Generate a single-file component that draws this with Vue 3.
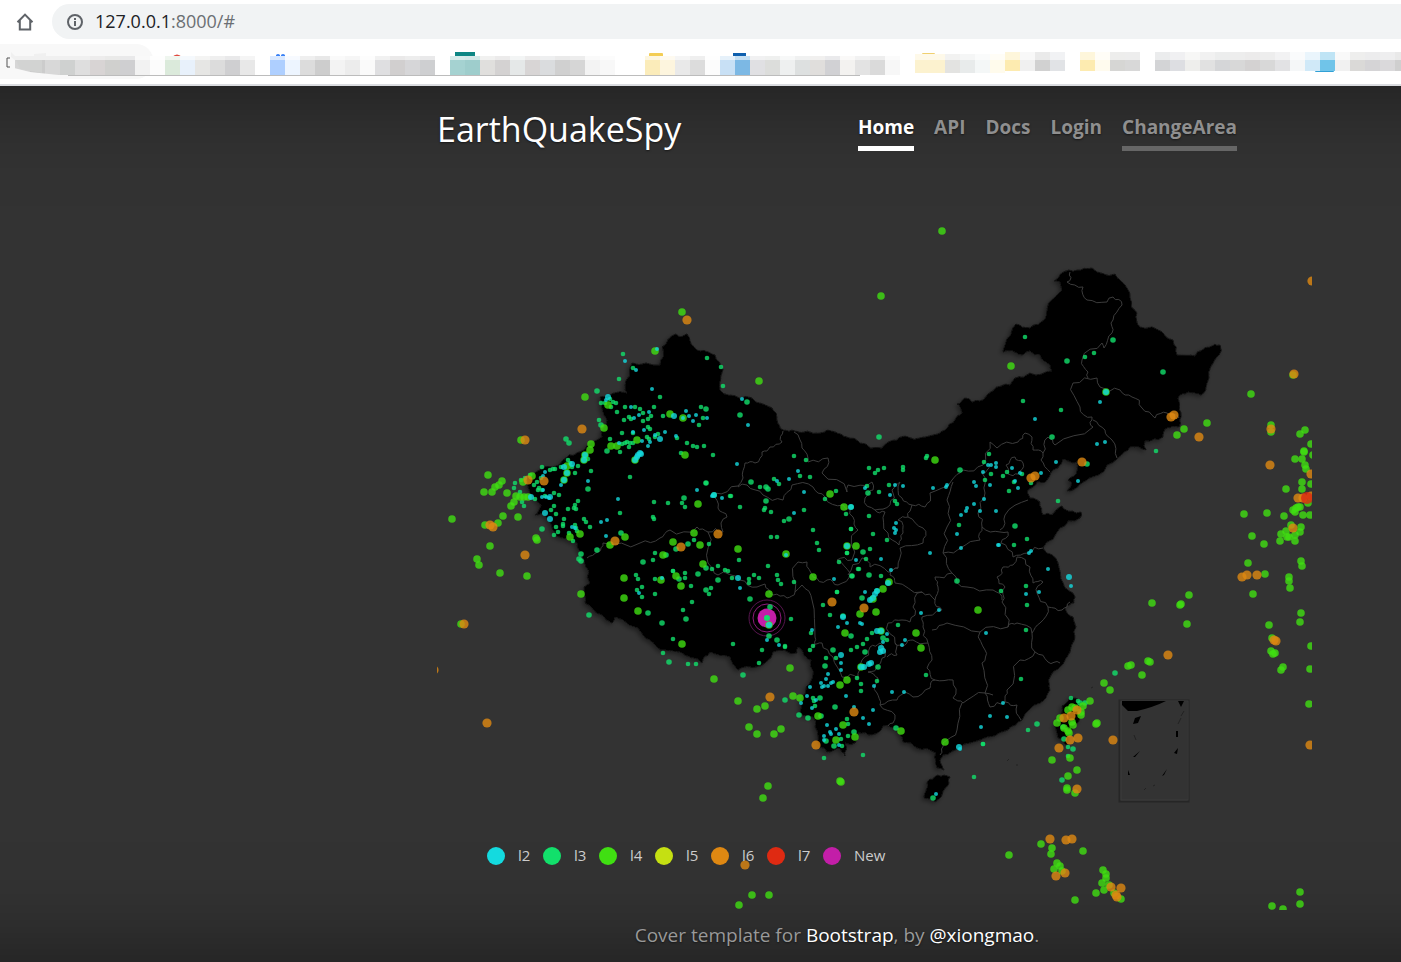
<script setup>
const navLinks = [
  { label: 'Home', state: 'active' },
  { label: 'API', state: '' },
  { label: 'Docs', state: '' },
  { label: 'Login', state: '' },
  { label: 'ChangeArea', state: 'hovered' },
]

const legend = [
  { label: 'l2', color: '#14dadf' },
  { label: 'l3', color: '#12e06b' },
  { label: 'l4', color: '#40df12' },
  { label: 'l5', color: '#c5e012' },
  { label: 'l6', color: '#df8812' },
  { label: 'l7', color: '#df2a12' },
  { label: 'New', color: '#c31ea8' },
]

/* bookmark mosaic: runs of 15px tiles, [start x, vertical shift, colours] */
const tileRuns = [
  [15, 0, 'd6d6d6 cccccc d8d8d8 cfd1d0 dedede d8d4d4 d0d0ce cfcfd1 f2f2f2 fcfcfc dbeadb e8f1fb e6e6e4 dcdcdc cfcfd1 e8e8e8'],
  [270, 0, 'aecfff edf5ff dcdcdc cdcdcd f3f3f3 ececec fafafa dfdfe1 d1cfcf d6d6d8 cecfd1'],
  [450, 0, 'a5d2d1 9ecdcc e0dfdd d4d2d2 e5e8e8 d8d5d5 dadcde d0d0d0 d6d6d6 f3f3f3 f8f8f8'],
  [645, 0, 'fbecba fdf5de e9e9e9 dcdcdc fcfcfc c8e0f5 7cb8e4 e0e0e3 dcdddb eef0f0 dde0e0 e0dedc d1d1d4 f3f2f0 e3e3e3 dadada f7f7f7'],
  [915, 2, 'fcf2cf fcf2cf e3e3e1 e8ebeb f4f7f7 fffbec'],
  [1005, 4, 'fdebb0 f0f0f0 d1d1d1 e1e3e6'],
  [1080, 4, 'fdebb0 fffbee d6d6d4 d8d8d8'],
  [1155, 4, 'd3d4d6 dddee2 eeeeec e1e1e1 d5d6d8 d8d8d8 d4d2d2 d8d8d8 e2e2e4 f5f7f8 d0e9f8 70c4e9 f1f1f1 dad9d7 d5d4d6 dad9db cfcfcf'],
]
const tiles = tileRuns.flatMap(([x, lift, list]) =>
  list.split(' ').map((c, i) => ({ x: x + i * 15, lift, fill: '#' + c })),
)

const points = (text) => text.trim().split(/\s+/).map((p) => p.split(',').map(Number))

/* adds small deterministic kinks so borders look like surveyed coastlines */
function roughen(list, closed, amount) {
  let line = closed ? [...list, list[0]] : list
  for (let pass = 0; pass < 2; pass++) {
    const out = [line[0]]
    for (let i = 1; i < line.length; i++) {
      const [ax, ay] = line[i - 1]
      const [bx, by] = line[i]
      const len = Math.hypot(bx - ax, by - ay)
      if (len > 5) {
        const r = Math.sin(ax * 12.9 + by * 78.2 + pass * 3.1) * 43758.5
        const k = ((r - Math.floor(r)) - 0.5) * amount * Math.min(len, 16)
        out.push([(ax + bx) / 2 - ((by - ay) / len) * k, (ay + by) / 2 + ((bx - ax) / len) * k])
      }
      out.push([bx, by])
    }
    line = out
  }
  return 'M' + line.map((p) => p[0].toFixed(1) + ' ' + p[1].toFixed(1)).join('L') + (closed ? 'Z' : '')
}

const land = [
  `662,347 676,334 681,337 687,334 690,341 700,351 708,352 715,355 723,370 720,390 728,395 752,398 772,408 777,420 783,430 795,431 820,433 835,432 847,437 860,443 882,448 897,440 908,437 933,435 945,430 955,420 962,413 957,404 965,398 980,401 993,391 1010,385 1015,378 1030,373 1052,371 1050,365 1040,355 1030,351 1023,355 1015,352 1003,352 1005,345 1016,324 1030,328 1045,319 1047,310 1062,290 1060,282 1054,281 1062,273 1077,270 1092,268 1115,274 1125,285 1130,298 1137,313 1140,327 1162,332 1173,340 1177,355 1195,356 1210,347 1220,345 1219,355 1213,363 1207,383 1201,395 1188,392 1178,398 1181,413 1179,427 1167,428 1163,437 1145,441 1146,450 1130,447 1118,458 1098,475 1083,482 1067,491 1072,483 1068,480 1077,470 1077,462 1063,459 1058,468 1047,480 1037,482 1027,492 1030,498 1040,502 1043,515 1052,515 1062,506 1072,511 1081,512 1080,518 1060,528 1043,548 1058,563 1063,583 1075,597 1074,603 1065,608 1073,617 1075,637 1070,652 1060,667 1050,677 1050,690 1040,703 1022,720 1008,730 980,740 960,747 943,755 940,760 944,770 937,768 936,753 917,748 903,742 893,728 883,726 872,735 858,733 855,743 845,743 845,756 839,748 827,752 820,747 818,737 813,717 800,713 800,702 810,683 811,660 803,652 798,647 797,653 773,652 757,667 738,670 730,657 710,652 702,663 680,652 655,645 643,635 615,617 612,623 592,608 585,603 584,587 590,583 584,560 577,543 555,535 550,522 542,513 535,515 541,505 530,493 527,478 540,470 563,460 577,453 602,437 607,420 600,397 627,393 625,387 632,363 660,365`,
  '927,782 938,775 950,777 945,788 935,802 924,798',
  '1070,697 1084,702 1080,716 1070,734 1066,745 1058,738 1055,723 1062,706',
].map((t) => roughen(points(t), true, 0.36))

const borders = [
  '783,431 782,442 770,447 762,452 755,463 745,463 743,478 738,486 715,493 718,508 727,517 721,523 723,532 708,532 697,527 670,530 660,538 640,543 603,543 598,552 587,558',
  '708,532 708,563 718,575 740,580 757,587 765,584 773,595 787,598 795,592 798,562 807,562 813,577 827,580 838,585 850,573 837,560 852,560 858,530 853,517 843,505 825,497 813,487 792,485 783,500 763,495 747,485 738,487',
  '795,592 802,585 812,600 815,637 813,647 822,643 833,657 842,677 858,678 862,660 870,647 880,643 885,657 878,665 868,672 878,678 877,693 880,705 895,715 893,723 888,726',
  '880,705 897,700 905,692 913,697 930,688 935,680 927,668 932,660 928,643 913,640 905,645 895,643 897,655 887,657',
  '895,643 888,623 902,620 910,622 913,607 922,592 895,583 890,575 898,568',
  '922,592 935,600 942,610 922,617 923,627 928,643',
  '932,630 947,623 980,632 985,650 982,663 985,693 993,695',
  '935,680 953,680 953,698 963,703 985,693',
  '962,703 957,730 943,743 940,755',
  '794,432 802,448 808,462 828,458 822,473 847,492 848,485 872,482 873,490 865,498 875,510 890,505 892,490 900,482 902,498 912,505 925,507 930,493 952,480 963,470 983,465 990,442 997,448 1018,442 1025,433 1032,437 1033,450 1043,453 1048,437 1055,445 1093,427 1092,417 1080,407 1073,383 1097,378 1100,387 1120,390 1132,397 1142,408 1155,418 1167,413 1179,418',
  '1070,272 1067,282 1083,287 1087,300 1107,302 1113,297 1122,305 1113,320 1112,333 1104,348 1102,343 1082,360 1088,372 1088,378',
  '1093,420 1105,430 1112,440 1117,458',
  '1043,453 1041,460 1050,472',
  '875,510 885,512 888,533 899,545 903,533 898,520 908,517 923,528 923,543 900,548 898,568 888,572 870,567 862,558 848,575',
  '908,517 912,505',
  '953,482 947,500 947,527 943,553 952,573 935,577 938,587 935,600',
  '943,553 962,547 980,540 982,527 978,513 985,493 982,473 990,465',
  '982,527 1000,532 1008,532 1001,543 1013,557 1028,553 1043,548',
  '1000,530 1005,515 1028,500',
  '1017,557 1013,565 1003,567 997,577 1005,587 1002,602 1008,627',
  '952,573 967,587 993,590 1002,600',
  '980,632 1008,627 1017,623 1032,633 1035,652 1020,660 1007,690 1005,702 990,707 985,693',
  '1017,557 1030,567 1033,583 1043,582 1037,593 1048,607 1040,623 1032,633',
  '1048,607 1062,610 1070,602',
  '1035,652 1048,662 1060,663',
  '1005,702 1017,705 1021,720',
  '1006,465 1015,457 1023,463 1018,474 1008,474 1006,465',
].map((t) => roughen(points(t), false, 0.5))

const quakes = [
  { color: '#12e06b', r: 2.3, at: `623,354 633,368 619,379 660,397 654,407 651,416 648,419 663,416 625,407 635,407 640,409 617,412 601,403 605,403 610,399 613,402 616,403 611,407 629,417 631,419 624,420 643,421 643,413 622,433 633,433 648,427 650,429 655,437 658,434 647,437 649,439 599,420 610,439 620,452 629,447 625,443 627,442 630,443 633,443 622,444 588,459 591,471 578,466 575,473 630,477 568,460 570,463 572,467 561,467 542,467 550,470 553,469 555,469 541,478 537,482 534,485 539,488 542,490 554,493 559,495 545,496 515,483 514,488 520,492 521,480 525,478 530,475 522,502 524,506 535,499 538,490 551,510 556,514 554,506 568,509 578,501 575,505 574,508 576,509 564,519 563,524 563,526 556,527 558,532 554,535 584,519 586,522 575,525 576,528 577,531 590,527 569,533 573,541 620,513 654,502 668,503 653,517 654,519 655,553 653,560 636,575 638,579 642,587 637,590 642,597 655,594 673,639 663,653 655,579 673,571
707,358 721,367 723,386 701,407 703,418 699,425 687,443 693,446 697,447 704,446 713,455 681,453 677,438 794,456 806,460 800,476 810,477 779,484 774,479 730,496 836,491 706,483 682,503 685,507 740,507 731,496 765,508 764,510 771,512 804,510 784,521 813,530 825,499 846,514 851,529 817,543 819,550 771,537 777,537 709,544 694,540 739,560 768,566 718,566 712,569 725,570 728,571 732,578 685,573 685,578 673,571 691,586 711,588 709,594 692,602 683,610 749,579 749,583 754,575 759,578 777,575 778,580 781,584 794,582 791,619 785,647 733,644 759,663 696,664 688,664 837,592 823,605 830,615 839,562 847,553 852,576 858,569 811,633 813,646 810,650
869,468 878,470 875,473 884,468 903,467 903,470 927,456 926,458 867,486 879,492 889,485 895,501 897,504 869,516 851,529 873,534 887,540 870,549 866,559 859,569 881,576 847,553 837,592 989,454 984,462 991,474 985,480 959,525 857,647 851,650 863,644 867,639 872,633 887,640 898,625 836,658 826,658 785,646 861,684 861,691 877,681 857,678 926,675 813,698 814,701 815,706 847,719 848,724 848,736 841,739 842,746 824,758 863,755 974,777 983,744
1025,337 1085,357 1094,353 1023,401 1061,410 1156,451 1007,472 1003,476 1022,474 1009,491 1014,482 1031,483 1058,501 1027,539 1014,545 1001,591 1026,586 1027,605 1026,630 1021,679 1028,730 983,744 1071,698 1078,701 1068,747 1068,756 762,650 760,487` },
  { color: '#12e06b', r: 2.8, at: `597,391 601,425 607,451 566,439 569,443 542,529 597,550 579,559 581,561 581,554 589,615 621,533 643,562 666,555 648,613 662,623 669,662 588,489 706,409 747,402 740,415 751,482 766,487 768,489 684,498 706,483 766,501 789,519 688,544 676,549 706,568 718,580 698,574 679,579 706,590 686,619 750,599 770,607 769,636 777,640 743,675 714,495 851,507 879,437 960,470 868,493 863,552 852,576 869,575 862,598 877,591 957,581 851,636 883,638 833,650 825,666 785,700 799,715 808,718 820,698 835,707 854,732 834,746 896,728 933,798 865,652 878,667 826,741 821,716 843,616 1113,340 1067,361 1163,372 1052,437 1087,464 1015,526 1037,724 1115,673 1080,703 1085,703 1073,749 1062,780 1064,739 1063,727` },
  { color: '#40df12', r: 3.8, at: `655,351 585,397 608,405 604,428 591,444 590,450 611,446 617,446 637,440 635,460 670,414 584,460 585,455 567,473 564,480 567,466 488,475 502,481 499,485 495,487 492,492 484,492 507,493 516,496 520,497 524,497 528,497 523,482 532,476 521,440 452,519 518,517 503,516 511,506 514,502 498,523 485,525 490,546 477,559 479,565 500,573 527,576 536,538 537,540 461,624 570,537 580,534 610,545 625,537 624,578 624,598 638,611 581,594 663,555 661,580 676,576 673,542 759,381 682,312 683,418 685,455 830,494 698,504 694,533 700,545 738,549 786,554 844,507 703,564 813,577 769,594 769,625 682,644 681,586 790,668 714,679 847,546 856,546 935,460 889,582 883,589 873,599 876,612 860,614 978,610 845,633 916,633 921,648 881,631 861,667 847,680 840,685 793,696 800,698 781,729 818,716 843,725 836,740 855,737 901,731 945,742 840,781 841,782 738,701 757,709 765,706 749,727 757,734 774,734 768,786 763,798 752,895 769,895 739,905
1009,855 1041,844 1052,848 1051,854 1083,851 1057,863 1060,866 1054,869 1062,871 1103,870 1106,874 1106,878 1102,883 1096,893 1104,890 1109,885 1075,900 1121,899 1114,893 1300,892 1300,904 1272,906 1283,909 1011,366 1106,392 1177,435 1184,429 1207,423 1090,701 1083,706 1081,712 1081,715 1072,707 1075,708 1068,710 1060,718 1057,723 1064,728 1068,731 1073,725 1072,722 1069,733 1096,724 1097,723 1052,760 1070,758 1077,770 1068,776 1067,788 1067,790 1075,793 1104,683 1110,690 1128,666 1131,665 1142,675 1148,661 1150,662 1152,603 1180,605 1181,604 1187,624 1189,595
1293,375 1251,394 1271,425 1271,432 1305,430 1300,434 1311,444 1304,451 1304,452 1295,459 1302,459 1305,465 1306,469 1302,482 1302,489 1286,489 1311,484 1313,455 1244,514 1267,513 1284,516 1296,508 1295,512 1298,507 1293,510 1300,507 1303,515 1310,515 1308,503 1291,525 1301,527 1300,532 1295,535 1295,541 1289,537 1287,537 1281,534 1280,541 1286,531 1252,536 1264,544 1248,563 1265,574 1253,594 1301,561 1302,566 1289,577 1289,581 1290,588 1301,613 1300,622 1269,625 1272,638 1271,651 1273,654 1275,653 1283,667 1281,670 1311,646 1310,669 1309,704 942,231 881,296` },
  { color: '#14dadf', r: 2, at: `657,349 625,361 636,370 652,389 631,407 634,418 639,415 649,412 665,432 676,436 644,430 633,432 655,435 642,441 648,446 650,442 619,443 606,400 561,485 588,481 545,472 543,476 543,490 618,499 542,497 546,497 549,498 572,527 575,528 601,522 607,520 606,536 662,578 639,593 742,399 748,425 686,411 689,416 696,415 693,421 707,418 683,418 737,464 697,490 798,471 789,479 777,481 804,492 722,498 712,496 740,588 794,513 834,579 767,640 779,645 812,630 786,555 865,488 895,485 903,486 890,495 933,488 946,487 947,485 896,523 894,528 896,530 895,533 881,559 891,570 930,553 961,548 957,534 961,515 967,508 966,511 974,504 980,511 984,499 974,482 976,486 983,472 996,511 996,463 996,467 990,485 998,545 988,465 991,465 856,560 865,592 921,613 939,610 838,627 847,623 860,623 862,624 841,663 841,670 828,674 826,679 831,683 833,682 821,683 822,687 828,686 824,686 810,687 807,696 801,703 816,700 812,708 846,696 874,686 892,692 904,692 873,710 863,718 869,724 854,707 836,729 839,734 830,732 831,734 827,725 824,736 824,740 839,745 936,794 960,749 981,727 990,716 986,633 902,645 905,640 887,634 883,642 1100,402 1035,419 1097,444 1105,442 1056,462 1012,468 1041,473 1020,473 1078,481 999,545 1029,553 1031,551 1048,569 1071,586 1039,592 1026,594 1003,703 1007,717 1015,481 1018,488` },
  { color: '#14dadf', r: 3, at: `640,453 641,454 637,457 638,455 635,460 567,473 564,480 572,464 585,455 584,460 564,467 674,416 660,439 608,397 531,497 550,497 545,513 550,519 714,495 738,578 769,625 851,507 847,546 888,583 873,598 875,594 870,600 843,617 877,591 877,631 881,631 881,648 880,652 883,651 871,663 869,664 861,667 864,667 841,655 1106,392 1069,577 959,747` },
  { color: '#df8812', r: 4.6, at: `525,440 582,429 528,480 544,481 490,525 493,527 525,555 464,624 434,670 615,541 681,547 687,320 718,534 832,602 864,608 854,712 816,745 770,697 487,723 745,865 1050,839 1066,840 1072,839 1056,876 1065,873 1111,887 1121,888 1116,895 1117,897 1171,417 1174,415 1199,437 1082,462 1031,478 1035,476 1168,655 1113,740 1078,738 1070,740 1059,748 1077,789 1077,710 1071,716 1064,718 1312,281 1294,374 1271,429 1270,465 1311,474 1298,498 1303,498 1311,496 1293,528 1242,577 1247,575 1257,575 1274,640 1276,641 1310,745` },
  { color: '#df2a12', r: 6, at: '1307,498' },
].map((g) => ({ ...g, at: points(g.at) }))
</script>

<template>
  <div class="window">
    <div class="toolbar">
      <button class="home" type="button" aria-label="Home page">
        <svg viewBox="0 0 18 18" width="18" height="18"><path d="M1.500 9.200 9 1.600l7.500 7.600M3.800 7.500v9h10.400v-9" fill="none" stroke="#5f6368" stroke-width="2" /></svg>
      </button>
      <div class="address">
        <svg viewBox="0 0 18 18" width="18" height="18"><circle cx="9" cy="9" r="7" fill="none" stroke="#5f6368" stroke-width="2" /><path d="M9 8v5M9 5v2" stroke="#5f6368" stroke-width="2" /></svg>
        <span class="url">127.0.0.1<span class="port">:8000/#</span></span>
      </div>
    </div>
    <svg class="bookmarks" width="1401" height="41" viewBox="0 43 1401 41" aria-hidden="true">
      <path d="M0 44h136a17 17 0 0 1 0 35H0z" fill="#f8f8f8" />
      <path d="M10 58H7v9h3" fill="none" stroke="#555" />
      <path d="M68 75.500H860" stroke="#bcbcbc" />
      <path d="M172 57q5-5 10 0z" fill="#e04a3f" />
      <path d="M276 57v-2q2-2 4 0v2zM281 57v-2q2-2 4 0v2z" fill="#3b82f6" />
      <rect x="455" y="52" width="20" height="8" fill="#0d8684" />
      <rect x="649" y="53" width="14" height="4" rx="1" fill="#f3cd55" />
      <rect x="733" y="53" width="13" height="4" fill="#0e5fae" />
      <rect x="922" y="53" width="13" height="3" rx="1" fill="#f0d070" />
      <rect x="1315" y="68" width="19" height="4" rx="1" fill="#31a0d5" />
      <g v-for="t in tiles" :key="t.x">
        <rect :x="t.x" :y="56 - t.lift" width="15" :height="4 + t.lift" fill="#fff" />
        <rect :x="t.x" :y="56 - t.lift" width="15" :height="4 + t.lift" :fill="t.fill" opacity=".45" />
        <rect :x="t.x" y="60" width="15" :height="15 - t.lift" :fill="t.fill" />
      </g>
      <path d="M10 52 14 68 30 72 68 76H10z" fill="#f8f8f8" />
      <path d="M11 52l4 4h75v4H15l-4-3zM34 54l12-1v4H34z" fill="#f0f0f0" />
      <path d="M16 60h26v13L20 69z" fill="#d2d3d2" />
      <path d="M455 56v-4h20v4h-10l-3-2v2z" fill="#0d8684" />
    </svg>

    <div class="cover">
      <div class="container">
        <header class="masthead">
          <h3>EarthQuakeSpy</h3>
          <nav>
            <a v-for="l in navLinks" :key="l.label" href="#" :class="l.state">{{ l.label }}</a>
          </nav>
        </header>

        <main class="chart">
          <svg class="map" viewBox="437 191 875 719" role="img" aria-label="Earthquake map">
            <defs>
              <filter id="glow" x="-10%" y="-10%" width="120%" height="120%">
                <feDropShadow dx="-2" dy="2" stdDeviation="2" flood-color="#000" flood-opacity=".4" />
              </filter>
            </defs>
            <g filter="url(#glow)">
              <path v-for="(d, i) in land" :key="i" :d="d" fill="#000" stroke="#141414" />
            </g>
            <path v-for="(d, i) in borders" :key="'b' + i" :d="d" fill="none" stroke="#3c3c3c" stroke-linejoin="round" />
            <rect x="1119.500" y="700.500" width="69" height="101" fill="none" stroke="#262626" stroke-width="2" />
            <rect x="1121" y="701" width="67" height="99" fill="none" stroke="#3c3c3c" />
            <path d="M1122 701h44q-12 6-29 10l-9 0-6-6zM1178 701h6l-3 6zM1135 718l6-2-3 7-5 1zM1176 731h2v6h-2zM1174 753l4-5-1 6zM1162 776l5-7-3 6zM1133 757l7-6-5 6zM1128 770l2 5h-2zM1134 736l2 4" fill="#000" />
            <path d="M1184 711l-3 5M1181 718l-3 6M1134 735l2 5M1144 790l2-2M1153 786l2-1M1007 761l2-2M1016 765h2M1091 688l2-1" stroke="#222" fill="none" />
            <circle cx="767" cy="618" r="9.500" fill="#c31ea8" />
            <circle cx="767" cy="618" r="14" fill="none" stroke="#8d1a7b" />
            <circle cx="767" cy="618" r="18" fill="none" stroke="#57154e" />
            <g v-for="(g, i) in quakes" :key="'q' + i" :fill="g.color">
              <circle v-for="(p, j) in g.at" :key="j" :cx="p[0]" :cy="p[1]" :r="g.r" opacity=".8" />
            </g>
            <circle cx="767" cy="618" r="3" fill="#12e06b" />
          </svg>
          <ul class="legend">
            <li v-for="item in legend" :key="item.label">
              <svg width="18" height="18" viewBox="0 0 18 18"><circle cx="9" cy="9" r="9" :fill="item.color" /></svg>
              <span>{{ item.label }}</span>
            </li>
          </ul>
        </main>

        <footer>Cover template for <a href="#">Bootstrap</a>, by <a href="#">@xiongmao</a>.</footer>
      </div>
    </div>
  </div>
</template>

<style>
body {
  background: #333;
  overflow-x: hidden;
}
</style>

<style scoped>
.window {
  min-height: 100vh;
  display: flex;
  flex-direction: column;
  font-family: "Open Sans", "Noto Sans", sans-serif;
  overflow: hidden;
}
.toolbar {
  display: flex;
  align-items: center;
  gap: 16px;
  height: 43px;
  padding-left: 16px;
  background: #fff;
}
.home {
  display: flex;
  padding: 0;
  border: 0;
  background: none;
}
.address {
  flex: 1;
  display: flex;
  align-items: center;
  gap: 11px;
  height: 35px;
  padding-left: 14px;
  margin-left: 2px;
  border-radius: 18px 0 0 18px;
  background: #f1f3f4;
}
.url {
  font-size: 18px;
  line-height: 24px;
  padding-bottom: 2px;
  color: #202124;
}
.port {
  color: #6b6f73;
}
.bookmarks {
  display: block;
  flex: none;
  background: #fff;
  border-bottom: 2px solid #dadce0;
}
.cover {
  position: relative;
  flex: 1;
  display: grid;
  grid-template-columns: 437fr 800fr 164fr;
  overflow: hidden;
  background: #333;
  color: #fff;
  text-shadow: 0 1px 2px rgba(0, 0, 0, 0.5);
}
.cover::before {
  content: "";
  position: absolute;
  inset: 0 -200px;
  box-shadow: inset 0 0 100px rgba(0, 0, 0, 0.5);
}
.container {
  position: relative;
  grid-column: 2;
  min-width: 0;
  padding-top: 20px;
}
.masthead {
  display: flex;
  justify-content: space-between;
  align-items: flex-start;
  height: 85px;
}
h3 {
  margin: 0;
  font-size: 34px;
  line-height: 46px;
  font-weight: 500;
}
nav {
  display: flex;
  gap: 20px;
}
nav a {
  padding: 5px 0 3px;
  border-bottom: 5px solid transparent;
  font-size: 19px;
  line-height: 32px;
  font-weight: 700;
  color: #8f8f8f;
  text-decoration: none;
}
nav .active {
  color: #fff;
  border-color: #fff;
}
nav .hovered {
  border-color: #666;
}
.chart {
  position: relative;
  width: 109.375%;
}
.map {
  display: block;
  width: 100%;
}
.legend {
  position: absolute;
  left: 50px;
  bottom: 43px;
  display: flex;
  margin: 0;
  padding: 0;
  list-style: none;
  font-size: 15px;
  line-height: 20px;
  color: #ccc;
  text-shadow: none;
}
.legend li {
  display: flex;
  align-items: center;
  gap: 13px;
  width: 56px;
}
.legend svg {
  flex: none;
}
.legend span {
  padding-bottom: 2px;
}
footer {
  padding-top: 9px;
  text-align: center;
  font-size: 19px;
  line-height: 32px;
  color: #999;
}
footer a {
  color: #fff;
  text-decoration: none;
}
</style>
